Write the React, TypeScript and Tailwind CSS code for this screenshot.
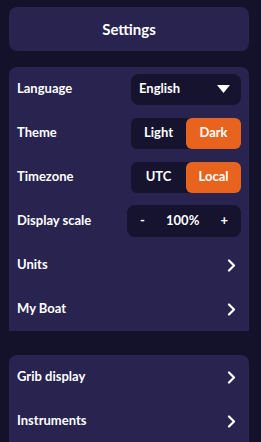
import React from "react";

const Chevron = () => (
  <svg width="9" height="13" viewBox="0 0 9 13" fill="none">
    <path d="M2 1.5 L7 6.5 L2 11.5" stroke="white" strokeWidth="2.2" strokeLinecap="round" strokeLinejoin="round" />
  </svg>
);

const Row = ({ label, children }: { label: string; children?: React.ReactNode }) => (
  <div className="flex h-[44px] items-center justify-between pl-[8px] pr-[8px]">
    <span className="text-[13px] font-bold text-white">{label}</span>
    {children}
  </div>
);

const Toggle = ({ a, b }: { a: string; b: string }) => (
  <div className="flex h-[31px] w-[110px] rounded-[6px] bg-[#16132f]">
    <div className="flex flex-1 items-center justify-center text-[13px] font-bold text-white">{a}</div>
    <div className="flex flex-1 items-center justify-center rounded-[6px] bg-[#e8641e] text-[13px] font-bold text-white">{b}</div>
  </div>
);

export default function App() {
  return (
    <div
      className="h-[442px] w-[261px] overflow-hidden bg-[#14122a] pl-[9px] pr-[12px] pt-[7px]"
      style={{ fontFamily: "Lato, 'Noto Sans', sans-serif" }}
    >
      <div className="flex h-[44px] items-center justify-center rounded-[8px] bg-[#28234f] text-[15px] font-bold text-white">
        Settings
      </div>
      <div className="mt-[16px] rounded-t-[8px] bg-[#28234f]">
        <Row label="Language">
          <div className="flex h-[31px] w-[110px] items-center justify-between rounded-[8px] bg-[#16132f] pl-[8px] pr-[11px]">
            <span className="text-[13px] font-bold text-white">English</span>
            <svg width="13" height="8" viewBox="0 0 13 8">
              <path d="M0 0 H13 L6.5 8 Z" fill="white" />
            </svg>
          </div>
        </Row>
        <Row label="Theme">
          <Toggle a="Light" b="Dark" />
        </Row>
        <Row label="Timezone">
          <Toggle a="UTC" b="Local" />
        </Row>
        <Row label="Display scale">
          <div className="flex h-[32px] w-[114px] items-center justify-between rounded-[8px] bg-[#16132f] px-[13px] text-[13px] font-bold text-white">
            <span>-</span>
            <span>100%</span>
            <span>+</span>
          </div>
        </Row>
        <Row label="Units">
          <div className="pr-[5px]"><Chevron /></div>
        </Row>
        <Row label="My Boat">
          <div className="pr-[5px]"><Chevron /></div>
        </Row>
      </div>
      <div className="mt-[24px] rounded-t-[8px] bg-[#28234f]">
        <Row label="Grib display">
          <div className="pr-[5px]"><Chevron /></div>
        </Row>
        <Row label="Instruments">
          <div className="pr-[5px]"><Chevron /></div>
        </Row>
      </div>
    </div>
  );
}
